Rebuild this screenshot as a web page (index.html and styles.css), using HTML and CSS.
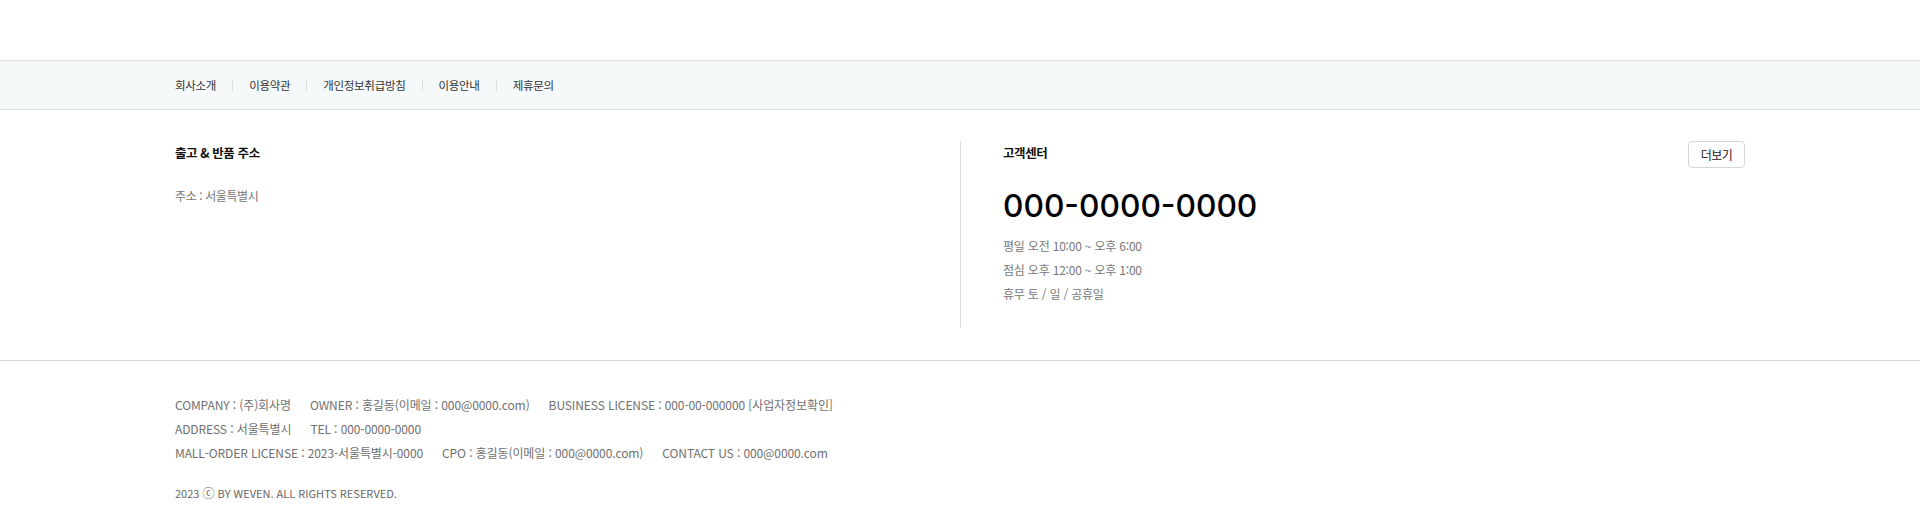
FILE: index.html
```html
<!DOCTYPE html>
<html lang="ko">
<head>
<meta charset="utf-8">
<title>Footer</title>
<link rel="stylesheet" href="styles.css">
</head>
<body>
<div class="top-space"></div>
<nav class="footer-nav">
  <div class="container nav-inner">
    <a class="nav-link" href="#">회사소개</a>
    <span class="nav-sep"></span>
    <a class="nav-link" href="#">이용약관</a>
    <span class="nav-sep"></span>
    <a class="nav-link" href="#">개인정보취급방침</a>
    <span class="nav-sep"></span>
    <a class="nav-link" href="#">이용안내</a>
    <span class="nav-sep"></span>
    <a class="nav-link" href="#">제휴문의</a>
  </div>
</nav>
<section class="info">
  <div class="container info-inner">
    <div class="col col-left">
      <h3 class="col-title">출고 &amp; 반품 주소</h3>
      <p class="address">주소 : 서울특별시</p>
    </div>
    <div class="col col-right">
      <div class="cs-head">
        <h3 class="col-title">고객센터</h3>
        <a class="more-btn" href="#">더보기</a>
      </div>
      <div class="phone">000-0000-0000</div>
      <ul class="hours">
        <li>평일 오전 10:00 ~ 오후 6:00</li>
        <li>점심 오후 12:00 ~ 오후 1:00</li>
        <li>휴무 토 / 일 / 공휴일</li>
      </ul>
    </div>
  </div>
</section>
<footer class="company">
  <div class="container">
    <p class="company-line"><span>COMPANY : (주)회사명</span><span>OWNER : 홍길동(이메일 : 000@0000.com)</span><span>BUSINESS LICENSE : 000-00-000000 [사업자정보확인]</span></p>
    <p class="company-line"><span>ADDRESS : 서울특별시</span><span>TEL : 000-0000-0000</span></p>
    <p class="company-line"><span>MALL-ORDER LICENSE : 2023-서울특별시-0000</span><span>CPO : 홍길동(이메일 : 000@0000.com)</span><span>CONTACT US : 000@0000.com</span></p>
    <p class="copyright">2023 <span class="copy-mark">ⓒ</span> BY WEVEN. ALL RIGHTS RESERVED.</p>
  </div>
</footer>
</body>
</html>
```

FILE: styles.css
```css
* { box-sizing: border-box; }
html, body { margin: 0; padding: 0; background: #fff; }
body {
  font-family: "Noto Sans CJK KR", "Noto Sans", sans-serif;
  color: #222;
}
.container {
  width: 1570px;
  margin: 0 auto;
}
.top-space { height: 60px; }

.footer-nav {
  background: #f6f9fa;
  border-top: 1px solid #dcdfe1;
  border-bottom: 1px solid #dcdfe1;
  height: 50px;
}
.nav-inner {
  display: flex;
  align-items: center;
  height: 48px;
}
.nav-link {
  font-size: 11.5px;
  letter-spacing: -0.3px;
  color: #333;
  text-decoration: none;
}
.nav-sep {
  width: 1px;
  height: 12px;
  background: #dcdcdc;
  margin: 0 16px;
}

.info { padding: 31px 0 32px; }
.info-inner {
  display: grid;
  grid-template-columns: 1fr 1fr;
}
.col-right {
  border-left: 1px solid #dcdcdc;
  padding: 0 0 22px 42px;
}
.col-title {
  margin: 0;
  font-size: 12.5px;
  line-height: 24px;
  font-weight: 700;
  letter-spacing: -0.4px;
  color: #111;
}
.address {
  margin: 19px 0 0;
  font-size: 12px;
  line-height: 24px;
  letter-spacing: -0.4px;
  color: #777;
}
.cs-head {
  display: flex;
  justify-content: space-between;
  align-items: flex-start;
}
.more-btn {
  display: flex;
  align-items: center;
  justify-content: center;
  width: 57px;
  height: 27px;
  border: 1px solid #d6d6d6;
  border-radius: 4px;
  font-size: 12px;
  letter-spacing: -0.5px;
  color: #222;
  text-decoration: none;
}
.phone {
  margin-top: 18px;
  font-family: Inter, "Noto Sans", sans-serif;
  font-size: 31.7px;
  line-height: 40px;
  font-weight: 500;
  color: #000;
}
.hours {
  list-style: none;
  margin: 8px 0 0;
  padding: 0;
}
.hours li {
  font-size: 12px;
  line-height: 24px;
  letter-spacing: -0.2px;
  color: #777;
}

.company {
  border-top: 1px solid #dcdcdc;
  padding: 32px 0 2px;
}
.company-line {
  margin: 0;
  display: flex;
  gap: 19px;
  font-size: 12px;
  line-height: 24px;
  letter-spacing: -0.1px;
  color: #707070;
}
.copyright {
  margin: 16px 0 0;
  font-size: 11px;
  line-height: 24px;
  color: #666;
}
.copy-mark { font-size: 12px; }
```
